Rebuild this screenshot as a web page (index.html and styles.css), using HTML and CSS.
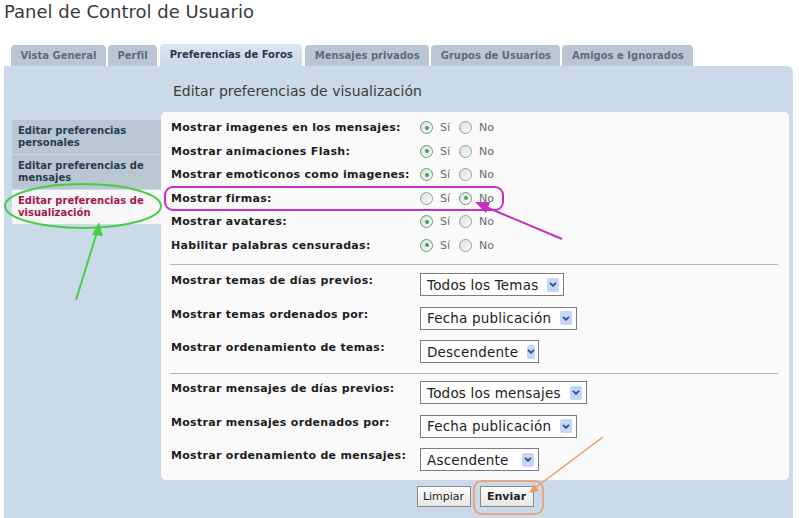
FILE: index.html
```html
<!DOCTYPE html>
<html lang="es">
<head>
    <meta charset="UTF-8">
    <meta name="viewport" content="width=device-width, initial-scale=1.0">
    <title>Panel de Control de Usuario</title>
    <link rel="stylesheet" href="styles.css">
</head>
<body>
    <!-- Titulo -->
    <h1 class="page-title">Panel de Control de Usuario</h1>

    <!-- Pestañas -->
    <ul class="tabs">
        <li class="tab">Vista General</li>
        <li class="tab">Perfil</li>
        <li class="tab tab-active">Preferencias de Foros</li>
        <li class="tab">Mensajes privados</li>
        <li class="tab">Grupos de Usuarios</li>
        <li class="tab">Amigos e Ignorados</li>
    </ul>

    <div class="panel">
        <h2 class="panel-heading">Editar preferencias de visualización</h2>

        <!-- Menu lateral -->
        <ul class="side-menu">
            <li class="side-item">Editar preferencias personales</li>
            <li class="side-item">Editar preferencias de mensajes</li>
            <li class="side-item side-item-active">Editar preferencias de visualización</li>
        </ul>

        <div class="content">
            <div class="radio-group">
                <div class="row">
                    <span class="label">Mostrar imagenes en los mensajes:</span>
                    <span class="options"><span class="radio checked"></span><span class="opt">Sí</span><span class="radio"></span><span class="opt">No</span></span>
                </div>
                <div class="row">
                    <span class="label">Mostrar animaciones Flash:</span>
                    <span class="options"><span class="radio checked"></span><span class="opt">Sí</span><span class="radio"></span><span class="opt">No</span></span>
                </div>
                <div class="row">
                    <span class="label">Mostrar emoticonos como imagenes:</span>
                    <span class="options"><span class="radio checked"></span><span class="opt">Sí</span><span class="radio"></span><span class="opt">No</span></span>
                </div>
                <div class="row">
                    <span class="label">Mostrar firmas:</span>
                    <span class="options"><span class="radio"></span><span class="opt">Sí</span><span class="radio checked"></span><span class="opt">No</span></span>
                </div>
                <div class="row">
                    <span class="label">Mostrar avatares:</span>
                    <span class="options"><span class="radio checked"></span><span class="opt">Sí</span><span class="radio"></span><span class="opt">No</span></span>
                </div>
                <div class="row">
                    <span class="label">Habilitar palabras censuradas:</span>
                    <span class="options"><span class="radio checked"></span><span class="opt">Sí</span><span class="radio"></span><span class="opt">No</span></span>
                </div>
            </div>

            <hr class="sep">

            <div class="select-group">
                <div class="select-row">
                    <span class="label">Mostrar temas de días previos:</span>
                    <div class="select"><span class="select-text">Todos los Temas</span><span class="select-arrow"><svg width="8" height="5" viewBox="0 0 8 5"><path d="M1 0.8 L4 3.8 L7 0.8" fill="none" stroke="#2d4d8c" stroke-width="1.8"/></svg></span></div>
                </div>
                <div class="select-row">
                    <span class="label">Mostrar temas ordenados por:</span>
                    <div class="select"><span class="select-text">Fecha publicación</span><span class="select-arrow"><svg width="8" height="5" viewBox="0 0 8 5"><path d="M1 0.8 L4 3.8 L7 0.8" fill="none" stroke="#2d4d8c" stroke-width="1.8"/></svg></span></div>
                </div>
                <div class="select-row">
                    <span class="label">Mostrar ordenamiento de temas:</span>
                    <div class="select select-order"><span class="select-text">Descendente</span><span class="select-arrow"><svg width="8" height="5" viewBox="0 0 8 5"><path d="M1 0.8 L4 3.8 L7 0.8" fill="none" stroke="#2d4d8c" stroke-width="1.8"/></svg></span></div>
                </div>
            </div>

            <hr class="sep">

            <div class="select-group select-group-last">
                <div class="select-row">
                    <span class="label">Mostrar mensajes de días previos:</span>
                    <div class="select"><span class="select-text">Todos los mensajes</span><span class="select-arrow"><svg width="8" height="5" viewBox="0 0 8 5"><path d="M1 0.8 L4 3.8 L7 0.8" fill="none" stroke="#2d4d8c" stroke-width="1.8"/></svg></span></div>
                </div>
                <div class="select-row">
                    <span class="label">Mostrar mensajes ordenados por:</span>
                    <div class="select"><span class="select-text">Fecha publicación</span><span class="select-arrow"><svg width="8" height="5" viewBox="0 0 8 5"><path d="M1 0.8 L4 3.8 L7 0.8" fill="none" stroke="#2d4d8c" stroke-width="1.8"/></svg></span></div>
                </div>
                <div class="select-row">
                    <span class="label">Mostrar ordenamiento de mensajes:</span>
                    <div class="select select-order"><span class="select-text">Ascendente</span><span class="select-arrow"><svg width="8" height="5" viewBox="0 0 8 5"><path d="M1 0.8 L4 3.8 L7 0.8" fill="none" stroke="#2d4d8c" stroke-width="1.8"/></svg></span></div>
                </div>
            </div>
        </div>

        <div class="buttons">
            <button class="btn">Limpiar</button>
            <button class="btn btn-main">Enviar</button>
        </div>
    </div>

    <!-- Anotaciones encima de la captura -->
    <svg class="annotations" width="799" height="518" viewBox="0 0 799 518">
        <ellipse cx="83" cy="206" rx="78" ry="22" fill="none" stroke="#46cf46" stroke-width="2"/>
        <line x1="76" y1="300" x2="97" y2="232" stroke="#46cf46" stroke-width="2"/>
        <polygon points="99,222 92,235 103,236" fill="#46cf46"/>

        <rect x="165" y="187" width="338" height="23" rx="8" fill="none" stroke="#c52fc5" stroke-width="2"/>
        <line x1="562" y1="239" x2="486" y2="207" stroke="#c52fc5" stroke-width="2"/>
        <polygon points="475,202 490,202 486,213" fill="#c52fc5"/>

        <rect x="474" y="481" width="69" height="33" rx="8" fill="none" stroke="#eb9a64" stroke-width="1.5"/>
        <line x1="603" y1="437" x2="535" y2="488" stroke="#eb9a64" stroke-width="1.5"/>
        <polygon points="529,493 539,491 534,484" fill="#eb9a64"/>
    </svg>
</body>
</html>
```

FILE: styles.css
```css
body {
    margin: 0;
    font-family: "DejaVu Sans", Verdana, sans-serif;
    background-color: #ffffff;
    color: #333333;
    position: relative;
    height: 518px;
    overflow: hidden;
}

.page-title {
    margin: 0 0 22px 0;
    padding: 1px 4px 0 4px;
    height: 22px;
    box-sizing: border-box;
    line-height: 22px;
    font-size: 18px;
    font-weight: normal;
    color: #3a3a3a;
}

/* pestañas */
.tabs {
    list-style: none;
    margin: 0;
    padding: 0 0 0 11px;
    display: flex;
    align-items: flex-end;
    gap: 2px;
    height: 22px;
}

.tab {
    height: 21px;
    line-height: 21px;
    padding: 0 9.5px;
    background-color: #bac7d3;
    border-radius: 4px 4px 0 0;
    font-size: 10px;
    font-weight: bold;
    color: #5a6d7d;
}

.tab-active {
    height: 22px;
    line-height: 22px;
    margin: 0 1px;
    background: linear-gradient(#dbe6ef, #cadae8);
    color: #26384a;
}

/* panel */
.panel {
    margin: 0 6px 0 4px;
    padding: 0 4px 11px 8px;
    background-color: #cadae8;
    border-radius: 0 6px 0 0;
    display: grid;
    grid-template-columns: 149px 1fr;
}

.panel-heading {
    grid-column: 2;
    grid-row: 1;
    margin: 0;
    padding: 16px 0 0 12px;
    height: 46px;
    box-sizing: border-box;
    font-size: 14px;
    line-height: 18px;
    font-weight: normal;
    color: #3c3c3c;
}

.side-menu {
    grid-column: 1;
    grid-row: 2;
    list-style: none;
    margin: 8px 0 0 0;
    padding: 0;
    display: flex;
    flex-direction: column;
    gap: 1px;
}

.side-item {
    height: 34px;
    box-sizing: border-box;
    padding: 5px 6px 0 6px;
    background-color: #b9c7d3;
    font-size: 10px;
    line-height: 12px;
    font-weight: bold;
    color: #293c4e;
}

.side-item-active {
    background-color: #f7f7f7;
    color: #a5164e;
}

.content {
    grid-column: 2;
    grid-row: 2;
    background-color: #fafafa;
    border-radius: 5px;
}

.radio-group {
    padding: 4px 10px 7px 10px;
}

.row {
    display: flex;
    align-items: center;
    height: 23.5px;
}

.label {
    width: 249px;
    flex-shrink: 0;
    font-size: 11px;
    letter-spacing: 0.3px;
    font-weight: bold;
    color: #1c1c1c;
}

.options {
    display: flex;
    align-items: center;
}

.radio {
    width: 13px;
    height: 13px;
    box-sizing: border-box;
    border: 1px solid #8d9ea4;
    border-radius: 50%;
    background: linear-gradient(135deg, #d8dddd, #ffffff);
    margin-right: 7px;
    position: relative;
}

.radio.checked {
    border-color: #5f9c78;
}

.radio.checked::after {
    content: "";
    position: absolute;
    left: 3.5px;
    top: 3.5px;
    width: 4px;
    height: 4px;
    border-radius: 50%;
    background-color: #3aa84a;
}

.opt {
    font-size: 11px;
    color: #6a6a6a;
    margin-right: 9px;
}

.sep {
    margin: 0 11px 0 9px;
    border: none;
    border-top: 1px solid #b4b4b4;
    height: 0;
}

.select-group {
    padding: 8px 10px 10px 10px;
    display: flex;
    flex-direction: column;
    gap: 10.5px;
}

.select-group-last {
    padding: 7px 10px 9px 10px;
}

.select-row {
    display: flex;
    align-items: flex-start;
}

.select-row .label {
    line-height: 15px;
}

.select {
    display: inline-flex;
    align-items: center;
    height: 23px;
    box-sizing: border-box;
    border: 1px solid #7c7c7c;
    background-color: #ffffff;
    padding: 0 4px 0 6px;
    font-size: 13.5px;
    letter-spacing: 0.2px;
    color: #222222;
}

.select-order {
    width: 119px;
}

.select-text {
    margin-right: 9px;
}

.select-arrow {
    margin-left: auto;
    width: 12px;
    height: 14px;
    display: flex;
    align-items: center;
    justify-content: center;
    background-color: #c6d6f6;
    border-radius: 2px;
}

.buttons {
    grid-column: 2;
    grid-row: 3;
    display: flex;
    justify-content: center;
    gap: 9px;
    padding-top: 6px;
}

.btn {
    width: 54px;
    height: 21px;
    padding: 0;
    border: 1px solid #8a8a8a;
    background: linear-gradient(#fdfdfd, #e6e6e6);
    font-family: "DejaVu Sans", Verdana, sans-serif;
    font-size: 11px;
    color: #222222;
}

.btn-main {
    font-weight: bold;
}

.annotations {
    position: absolute;
    left: 0;
    top: 0;
    pointer-events: none;
}
```
